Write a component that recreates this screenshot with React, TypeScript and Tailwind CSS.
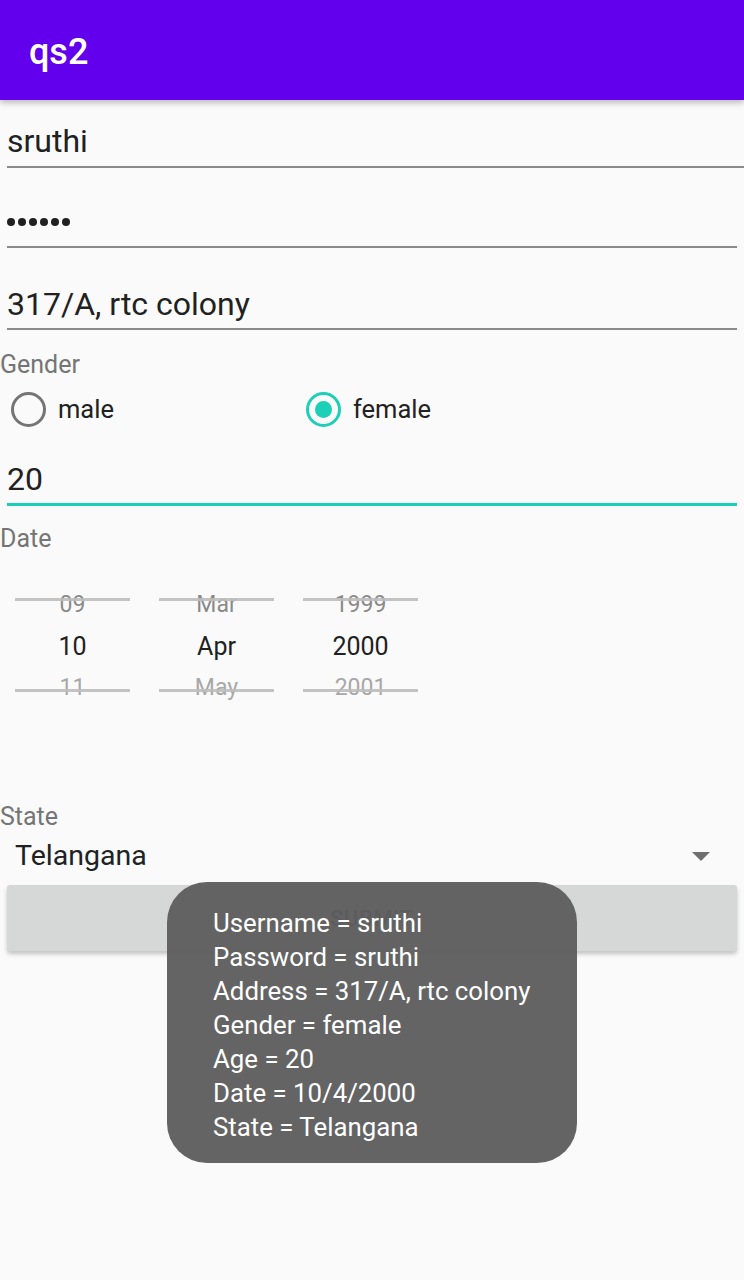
const font = { fontFamily: "Roboto, 'Liberation Sans', sans-serif" };

const Picker = ({ items }: { items: [string, string, string] }) => (
  <div className="relative w-[115px]">
    <div className="h-[42px] flex items-center justify-center text-[23px] text-[#8a8a8a]">{items[0]}</div>
    <div className="h-[41px] flex items-center justify-center text-[25px] text-[#212121]">{items[1]}</div>
    <div className="h-[42px] flex items-center justify-center text-[23px] text-[#a8a8a8]">{items[2]}</div>
    <div className="absolute left-0 right-0 top-[14px] h-[2.5px] bg-[#bdbdbd]/90" />
    <div className="absolute left-0 right-0 top-[105px] h-[2.5px] bg-[#bdbdbd]/90" />
  </div>
);

const Radio = ({ checked, label, className }: { checked?: boolean; label: string; className?: string }) => (
  <div className={`flex items-center gap-[12px] ${className ?? ""}`}>
    {checked ? (
      <div className="w-[35px] h-[35px] rounded-full border-[3.5px] border-[#1ccfb7] flex items-center justify-center">
        <div className="w-[17px] h-[17px] rounded-full bg-[#1ccfb7]" />
      </div>
    ) : (
      <div className="w-[35px] h-[35px] rounded-full border-[3.5px] border-[#757575]" />
    )}
    <span className="text-[25.5px] text-[#212121]">{label}</span>
  </div>
);

export default function App() {
  return (
    <div className="relative w-[744px] h-[1280px] bg-[#fafafa] overflow-hidden" style={font}>
      <header className="relative z-10 h-[100px] bg-[#6200ee] pl-[29px] pt-[28px] shadow-[0_3px_6px_rgba(0,0,0,0.25)]">
        <h1 className="text-[36px] leading-[48px] font-medium text-white">qs2</h1>
      </header>

      <div className="flex flex-col">
        {/* username */}
        <div className="ml-[7px] pt-[21px] pb-[5px] border-b-2 border-[#8a8a8a]">
          <div className="text-[32px] leading-[40px] text-[#212121]">sruthi</div>
        </div>

        {/* password */}
        <div className="mx-[7px] mt-[50px] pb-[20px] border-b-2 border-[#8a8a8a] flex gap-[3px]">
          {[0, 1, 2, 3, 4, 5].map((i) => (
            <span key={i} className="w-[8px] h-[8px] rounded-full bg-[#212121]" />
          ))}
        </div>

        {/* address */}
        <div className="mx-[7px] pt-[36px] pb-[4px] border-b-2 border-[#8a8a8a]">
          <div className="text-[32px] leading-[40px] text-[#212121]">317/A, rtc colony</div>
        </div>

        <div className="mt-[21px] text-[25px] leading-[28px] text-[#757575]">Gender</div>

        <div className="mt-[6px] h-[48px] flex items-center pl-[11px]">
          <Radio label="male" className="w-[295px]" />
          <Radio label="female" checked />
        </div>

        {/* age */}
        <div className="mx-[7px] mt-[26px] pb-[4px] border-b-[3px] border-[#1ccfb7]">
          <div className="text-[32px] leading-[40px] text-[#212121]">20</div>
        </div>

        <div className="mt-[19px] text-[25px] leading-[28px] text-[#757575]">Date</div>

        <div className="mt-[31px] ml-[15px] flex gap-[29px]">
          <Picker items={["09", "10", "11"]} />
          <Picker items={["Mar", "Apr", "May"]} />
          <Picker items={["1999", "2000", "2001"]} />
        </div>

        <div className="mt-[94px] text-[25px] leading-[28px] text-[#757575]">State</div>

        <div className="mt-[7px] pl-[15px] pr-[34px] flex items-center justify-between">
          <span className="text-[28.5px] leading-[36px] text-[#212121]">Telangana</span>
          <svg width="18" height="9" viewBox="0 0 18 9">
            <path d="M0 0 H18 L9 9 Z" fill="#6f6f6f" />
          </svg>
        </div>

        <button className="mx-[7px] mt-[11px] h-[66px] rounded-[3px] bg-[#d6d7d7] shadow-[0_3px_4px_rgba(0,0,0,0.22)] text-[22px] font-medium tracking-wide text-[#3b3b3b]">
          SUBMIT
        </button>
      </div>

      {/* toast */}
      <div className="absolute left-[167px] top-[882px] w-[410px] h-[281px] rounded-[40px] bg-[#5e5e5e]/[0.96] pl-[46px] pt-[24px]">
        {[
          "Username = sruthi",
          "Password = sruthi",
          "Address = 317/A, rtc colony",
          "Gender = female",
          "Age = 20",
          "Date = 10/4/2000",
          "State = Telangana",
        ].map((l) => (
          <div key={l} className="text-[25.8px] leading-[34px] text-white whitespace-nowrap">
            {l}
          </div>
        ))}
      </div>
    </div>
  );
}
